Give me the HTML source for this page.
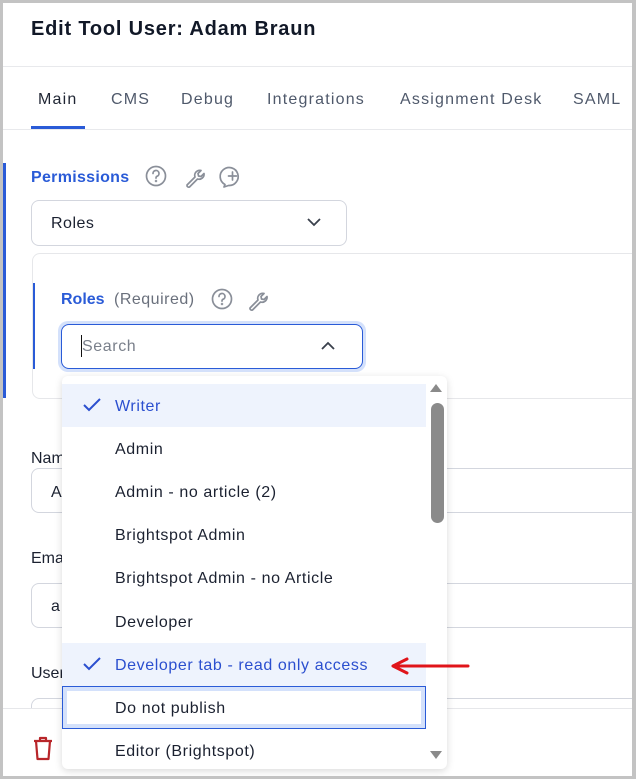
<!DOCTYPE html>
<html><head><meta charset="utf-8"><style>
*{box-sizing:border-box;margin:0;padding:0}
body{width:636px;height:779px;overflow:hidden;background:#fff;font-family:"Liberation Sans",sans-serif;position:relative}
.a{position:absolute}
.frame{left:0;top:0;width:636px;height:779px;border:3px solid #c3c3c3;border-right-width:4px;z-index:50;pointer-events:none}
.t{white-space:nowrap;line-height:1}
.tab{top:92px;font-size:16px;color:#4f596b;letter-spacing:1.2px}
.box{border:1px solid #d3d6de;border-radius:8px;background:#fff}
.item{position:absolute;left:0;width:364px;height:43px;font-size:16px;color:#1b2130;padding-left:53px;line-height:45px;white-space:nowrap;letter-spacing:.6px}
.sel{background:#eef3fd;color:#2b4fcf}
.chk{position:absolute;left:20px;top:13px}
</style></head><body>
<div class="a frame"></div>
<div class="a t" style="left:31px;top:19px;font-size:20px;font-weight:bold;color:#111827;letter-spacing:.8px">Edit Tool User: Adam Braun</div>
<div class="a" style="left:3px;top:66px;width:630px;height:1px;background:#e8e9ec"></div>
<div class="a t tab" style="left:38px;color:#1f2533">Main</div>
<div class="a t tab" style="left:111px">CMS</div>
<div class="a t tab" style="left:181px">Debug</div>
<div class="a t tab" style="left:267px">Integrations</div>
<div class="a t tab" style="left:400px">Assignment Desk</div>
<div class="a t tab" style="left:573px">SAML</div>
<div class="a" style="left:3px;top:129px;width:630px;height:1px;background:#e8e9ec"></div>
<div class="a" style="left:31px;top:126px;width:54px;height:3px;background:#2a5bd7"></div>

<div class="a" style="left:3px;top:163px;width:3px;height:235px;background:#2a5bd7"></div>
<div class="a t" style="left:31px;top:170px;font-size:16px;font-weight:bold;color:#2a5bd7;letter-spacing:.3px">Permissions</div>
<svg class="a" style="left:145px;top:165px" width="110" height="24" fill="none" stroke="#8a8f99" stroke-width="1.7" stroke-linecap="round" stroke-linejoin="round">
<circle cx="11" cy="11" r="9.5"/><path d="M8 8.5a3 3 0 1 1 4 2.8c-.8.4-1 1-1 1.8"/><circle cx="11" cy="16" r=".4" fill="#8a8f99"/>
<path d="M42 20l8-8a5 5 0 0 1 6-6.5l-3 3 .5 2.5 2.5.5 3-3A5 5 0 0 1 52.5 14l-8 8a1.8 1.8 0 0 1-2.5-2z"/>
<path d="M80 19.5a9 9 0 1 1 3.5 1L79 22z"/><path d="M87.5 7v8M83.5 11h8"/>
</svg>
<div class="a box" style="left:31px;top:200px;width:316px;height:46px"></div>
<div class="a t" style="left:51px;top:216px;font-size:16px;color:#1b2130;letter-spacing:.5px">Roles</div>
<svg class="a" style="left:306px;top:216px" width="16" height="12" fill="none" stroke="#3a404c" stroke-width="1.8"><path d="M2 3l6 6 6-6"/></svg>

<div class="a" style="left:32px;top:253px;width:610px;height:146px;border:1px solid #e6e7ea;border-radius:8px"></div>
<div class="a" style="left:33px;top:283px;width:2px;height:86px;background:#2a5bd7"></div>
<div class="a t" style="left:61px;top:292px;font-size:16px;font-weight:bold;color:#2a5bd7">Roles</div>
<div class="a t" style="left:114px;top:292px;font-size:16px;color:#6a707c;letter-spacing:.5px">(Required)</div>
<svg class="a" style="left:211px;top:288px" width="70" height="24" fill="none" stroke="#8a8f99" stroke-width="1.7" stroke-linecap="round" stroke-linejoin="round">
<circle cx="11" cy="11" r="9.5"/><path d="M8 8.5a3 3 0 1 1 4 2.8c-.8.4-1 1-1 1.8"/><circle cx="11" cy="16" r=".4" fill="#8a8f99"/>
<path d="M39 20l8-8a5 5 0 0 1 6-6.5l-3 3 .5 2.5 2.5.5 3-3A5 5 0 0 1 49.5 14l-8 8a1.8 1.8 0 0 1-2.5-2z"/>
</svg>
<div class="a" style="left:58px;top:321px;width:308px;height:51px;border-radius:10px;background:#d4e1fb"></div>
<div class="a" style="left:61px;top:324px;width:302px;height:45px;border:1px solid #2a5bd7;border-radius:8px;background:#fff"></div>
<div class="a" style="left:81px;top:335px;width:1px;height:22px;background:#111"></div>
<div class="a t" style="left:82px;top:339px;font-size:16px;color:#7a808b;letter-spacing:.6px">Search</div>
<svg class="a" style="left:320px;top:340px" width="16" height="12" fill="none" stroke="#3a404c" stroke-width="1.8"><path d="M2 9l6-6 6 6"/></svg>

<div class="a t" style="left:31px;top:451px;font-size:16px;color:#1b2130">Name</div>
<div class="a box" style="left:31px;top:468px;width:620px;height:45px"></div>
<div class="a t" style="left:51px;top:485px;font-size:16px;color:#1b2130">A</div>
<div class="a t" style="left:31px;top:551px;font-size:16px;color:#1b2130">Email</div>
<div class="a box" style="left:31px;top:583px;width:620px;height:45px"></div>
<div class="a t" style="left:51px;top:599px;font-size:16px;color:#1b2130">a</div>
<div class="a t" style="left:31px;top:666px;font-size:16px;color:#1b2130">User</div>
<div class="a box" style="left:31px;top:698px;width:620px;height:45px"></div>
<div class="a" style="left:3px;top:708px;width:630px;height:70px;background:#fff;border-top:1px solid #e6e7ea"></div>
<svg class="a" style="left:32px;top:736px" width="22" height="26" fill="none" stroke="#b8262a" stroke-width="2.2" stroke-linejoin="round"><path d="M2 5h18M8 5V2h6v3M4 5l1.5 18h11L18 5"/></svg>

<div class="a" style="left:62px;top:376px;width:385px;height:393px;background:#fff;border-radius:6px;box-shadow:0 2px 8px rgba(0,0,0,.15);overflow:hidden">
 <div class="item sel" style="top:8px">Writer<svg class="chk" width="20" height="16" fill="none" stroke="#2b4fcf" stroke-width="2"><path d="M2 8l5 5 11-11"/></svg></div>
 <div class="item" style="top:51px">Admin</div>
 <div class="item" style="top:94px">Admin - no article (2)</div>
 <div class="item" style="top:137px">Brightspot Admin</div>
 <div class="item" style="top:180px">Brightspot Admin - no Article</div>
 <div class="item" style="top:224px">Developer</div>
 <div class="item sel" style="top:267px">Developer tab - read only access<svg class="chk" width="20" height="16" fill="none" stroke="#2b4fcf" stroke-width="2"><path d="M2 8l5 5 11-11"/></svg></div>
 <div class="item" style="top:310px;border:1px solid #2a5bd7;box-shadow:inset 0 0 0 4px #d4e1fb;line-height:43px;padding-left:52px">Do not publish</div>
 <div class="item" style="top:353px">Editor (Brightspot)</div>
 <svg class="a" style="left:366px;top:5px" width="16" height="12"><path d="M2 11L8 3l6 8z" fill="#8a8a8a"/></svg>
 <div class="a" style="left:369px;top:27px;width:13px;height:120px;border-radius:7px;background:#8a8a8a"></div>
 <svg class="a" style="left:366px;top:374px" width="16" height="12"><path d="M2 1L8 9l6-8z" fill="#8a8a8a"/></svg>
</div>
<svg class="a" style="left:390px;top:656px" width="82" height="20"><path d="M8 10H78" stroke="#e0141a" stroke-width="3" stroke-linecap="round"/><path d="M3 10L17 3M3 10L17 17" stroke="#e0141a" stroke-width="3" stroke-linecap="round"/></svg>
</body></html>
